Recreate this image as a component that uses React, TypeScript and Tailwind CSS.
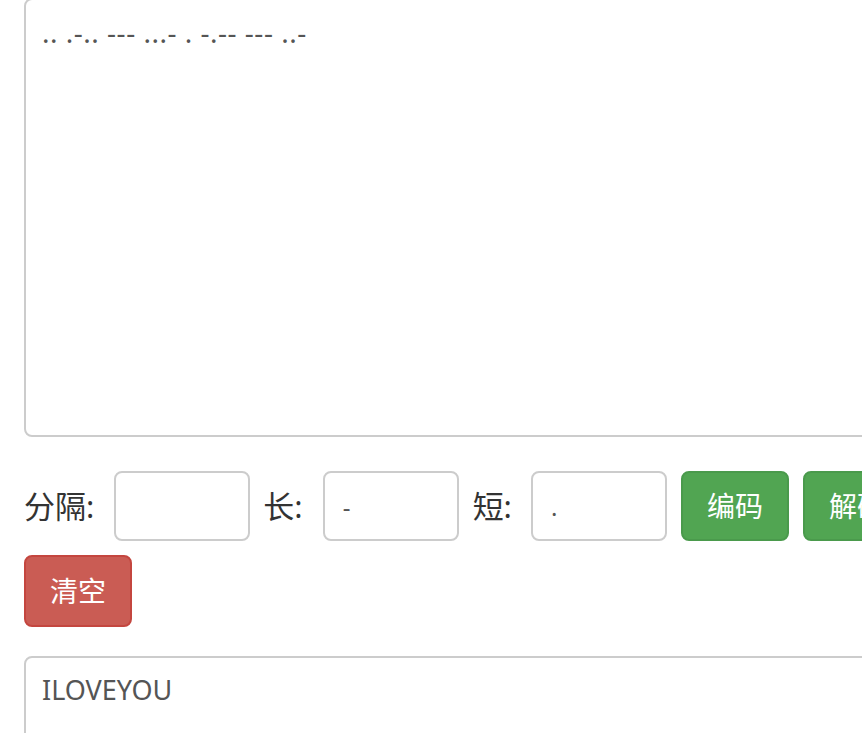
import { useState } from 'react'

const font = { fontFamily: '"Noto Sans", "Noto Sans CJK SC", sans-serif' }

export default function App() {
  const [source, setSource] = useState('.. .-.. --- ...- . -.-- --- ..-')
  const [result, setResult] = useState('ILOVEYOU')

  return (
    <div className="w-[862px] h-[733px] overflow-hidden bg-white" style={font}>
      <div className="w-[960px] px-[24px]">
        {/* Input */}
        <textarea
          value={source}
          onChange={(e) => setSource(e.target.value)}
          className="block w-full h-[439px] -mt-[2px] resize-none rounded-[8px] border-2 border-[#cccccc] bg-white px-[16px] py-[12px] text-[28px] tracking-[0.5px] leading-[40px] text-[#555555] outline-none"
        />

        {/* Controls */}
        <div className="mt-[34px] flex flex-wrap items-center gap-y-[14px] text-[31px] text-[#333333]">
          <label className="mr-[20px]">分隔:</label>
          <input
            defaultValue=""
            className="w-[136px] h-[70px] rounded-[8px] border-2 border-[#cccccc] px-[18px] text-[24px] text-[#555555] outline-none"
          />
          <label className="ml-[13px] mr-[20px]">长:</label>
          <input
            defaultValue="-"
            className="w-[136px] h-[70px] rounded-[8px] border-2 border-[#cccccc] px-[18px] text-[24px] text-[#555555] outline-none"
          />
          <label className="ml-[14px] mr-[19px]">短:</label>
          <input
            defaultValue="."
            className="w-[136px] h-[70px] rounded-[8px] border-2 border-[#cccccc] px-[18px] text-[24px] text-[#555555] outline-none"
          />
          <button className="ml-[14px] w-[108px] h-[70px] rounded-[8px] border-2 border-[#4a9a4c] bg-[#51a552] text-[28px] text-white">
            编码
          </button>
          <button className="ml-[14px] w-[108px] h-[70px] rounded-[8px] border-2 border-[#4a9a4c] bg-[#51a552] text-[28px] text-white">
            解码
          </button>
          <button className="mr-[300px] w-[108px] h-[72px] rounded-[8px] border-2 border-[#c4463f] bg-[#ca5c54] text-[28px] text-white">
            清空
          </button>
        </div>

        {/* Output */}
        <textarea
          value={result}
          onChange={(e) => setResult(e.target.value)}
          className="mt-[29px] block w-full h-[300px] resize-none rounded-[8px] border-2 border-[#cccccc] bg-white px-[16px] py-[12px] text-[27px] leading-[40px] text-[#555555] outline-none"
        />
      </div>
    </div>
  )
}
